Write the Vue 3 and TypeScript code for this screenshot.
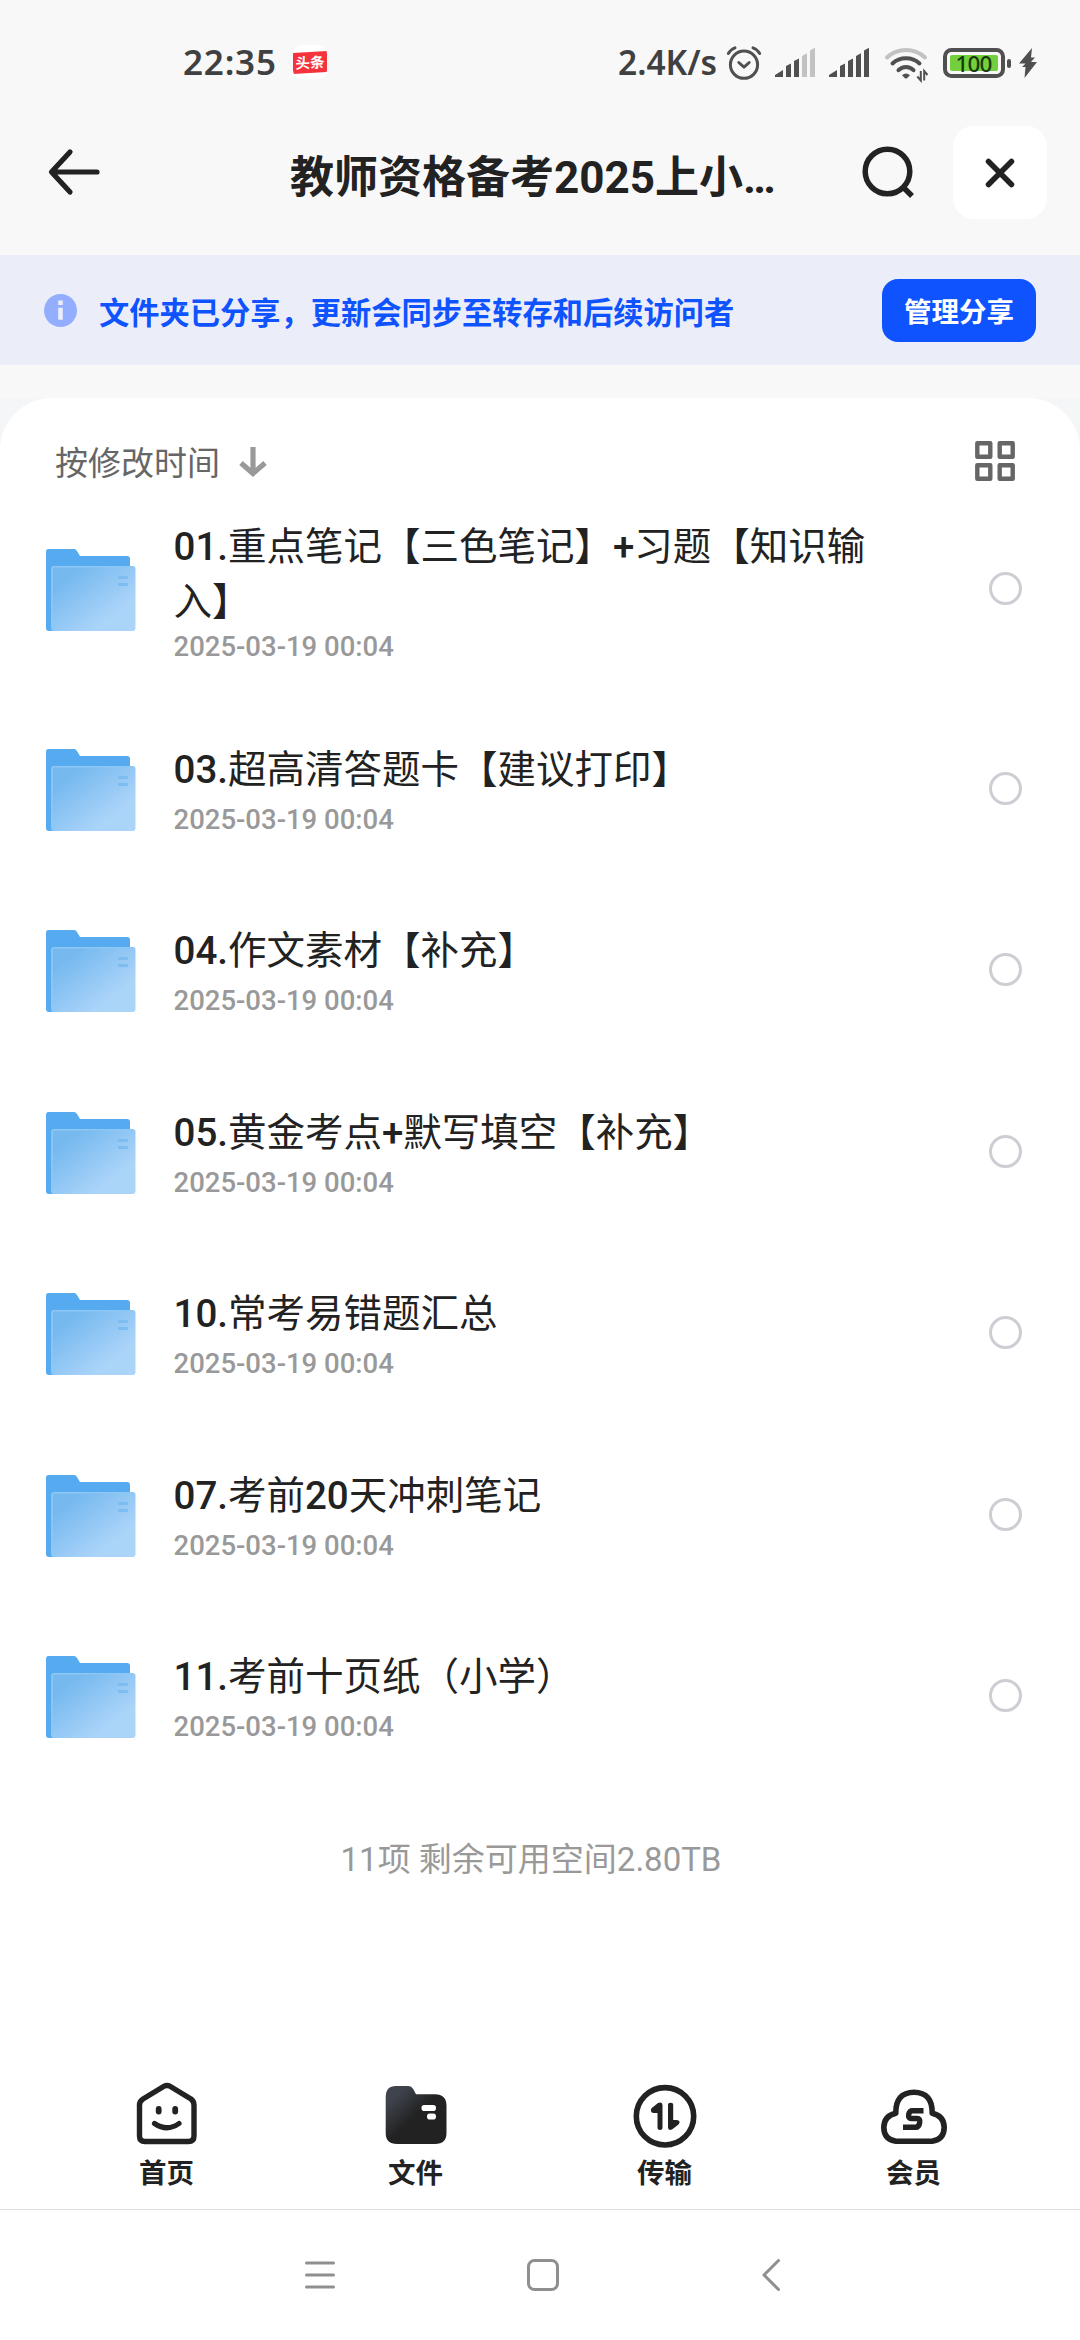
<script setup lang="ts">
interface FolderItem {
  name: string
  time: string
  tall?: boolean
}

interface Run {
  text: string
  latin: boolean
}

const folders: FolderItem[] = [
  { name: '01.重点笔记【三色笔记】+习题【知识输\n入】', time: '2025-03-19 00:04', tall: true },
  { name: '03.超高清答题卡【建议打印】', time: '2025-03-19 00:04' },
  { name: '04.作文素材【补充】', time: '2025-03-19 00:04' },
  { name: '05.黄金考点+默写填空【补充】', time: '2025-03-19 00:04' },
  { name: '10.常考易错题汇总', time: '2025-03-19 00:04' },
  { name: '07.考前20天冲刺笔记', time: '2025-03-19 00:04' },
  { name: '11.考前十页纸（小学）', time: '2025-03-19 00:04' },
]

// Latin runs are set in medium weight, Chinese runs in regular
function runs(line: string): Run[] {
  return (line.match(/[\x20-\x7e]+|[^\x20-\x7e]+/g) ?? []).map((text) => ({
    text,
    latin: /^[\x20-\x7e]/.test(text),
  }))
}
</script>

<template>
  <div class="screen">
    <div class="status">
      <span class="clock">22:35</span>
      <span class="news"><span class="news-tag">头条</span></span>
      <span class="speed">2.4K/s</span>
      <svg class="status-icons" width="316" height="40" viewBox="724 42 316 40" fill="none">
        <g stroke="#505050" stroke-width="3" stroke-linecap="round" stroke-linejoin="round">
          <circle cx="744" cy="63.7" r="13.6" />
          <path d="M738.800 61.500l5.200 4.600 5.200-4.600" />
          <path d="M728.300 52.500q2.500-4.300 6.700-5.700M759.700 52.500q-2.500-4.300-6.700-5.700" />
        </g>
        <g fill="#505050">
          <path d="M775 76v-2l8-5v7zM786 76V65l5-2.500V76zM794 76V60l5-2.500V76z" />
          <path d="M802 76V55l5-2.800V76zM810 76V49.500l5-2.800V76z" fill="#c2c2c2" />
          <path d="M829 76v-2l8-5v7zM840 76V65l5-2.500V76zM848 76V60l5-2.500V76zM856 76V55l5-2.800V76zM864 76V49.500l5-2.800V76z" />
        </g>
        <g stroke-width="4" stroke-linecap="round">
          <path d="M887 56.500Q895 49 906 49T925 56.500" stroke="#c2c2c2" />
          <path d="M892.500 62.500Q898 57.300 906 57.300T919.500 62.500" stroke="#505050" />
          <path d="M898.500 69.200Q901.500 66 906 66T913.500 69.200" stroke="#505050" />
        </g>
        <path d="M902 74.200q4-3.600 8 0l-3 3q-1 .8-2 0z" fill="#505050" />
        <path d="M920.800 70v9.500l-3.500-4M924.200 79.500V70l3.300 4" stroke="#505050" stroke-width="2" />
        <rect x="945" y="49" width="58" height="26" rx="6.500" stroke="#505050" stroke-width="4" />
        <rect x="950" y="54" width="48" height="16" rx="2" fill="#74cf3e" />
        <text x="973.500" y="70.700" text-anchor="middle" class="battery-text">100</text>
        <rect x="1007" y="58" width="4" height="9" rx="2" fill="#505050" />
        <path d="M1032 47l-13 15.500h6.500L1022 66h3.500l-1 11 12.500-16h-6l4-4.500h-4z" fill="#505050" />
      </svg>
    </div>

    <header class="header">
      <svg class="back" width="54" height="54" viewBox="0 0 54 54">
        <path d="M24 7L5.500 27 24 47M6 27H51" fill="none" stroke="#222" stroke-width="5.200" stroke-linecap="round" stroke-linejoin="round" />
      </svg>
      <h1 class="title">教师资格备考2025上小…</h1>
      <svg class="search" width="54" height="54" viewBox="0 0 54 54" fill="none" stroke="#222" stroke-width="5.500">
        <circle cx="26.500" cy="26.500" r="22.300" />
        <path d="M42 42l9 9" />
      </svg>
      <button class="close">
        <svg width="34" height="34" viewBox="0 0 34 34">
          <path d="M5.500 5.500l23 23M28.500 5.500l-23 23" stroke="#222" stroke-width="5.500" stroke-linecap="round" />
        </svg>
      </button>
    </header>

    <div class="banner">
      <svg width="33" height="33" viewBox="0 0 33 33">
        <circle cx="16.500" cy="16.500" r="16.500" fill="#93aefe" />
        <path d="M14.200 6.500h4.600v4.600h-4.600zM14.200 13.800h4.600v12h-4.600z" fill="#ebeef8" />
      </svg>
      <span class="banner-text">文件夹已分享，更新会同步至转存和后续访问者</span>
      <button class="manage">管理分享</button>
    </div>

    <div class="sheet-back">
      <main class="sheet">
        <div class="sort">
          <span class="sort-label">按修改时间</span>
          <svg class="sort-arrow" width="28" height="30" viewBox="0 0 28 30">
            <path d="M14 0V25M2 16l12 10.500L26 16" fill="none" stroke="#999" stroke-width="5.200" />
          </svg>
          <svg class="grid" width="40" height="40" viewBox="0 0 40 40">
            <path d="M2.300 2.300h13v13.500h-13zM24.700 2.300h13v13.500h-13zM2.300 24.300h13v13.500h-13zM24.700 24.300h13v13.500h-13z" fill="none" stroke="#666" stroke-width="4.400" stroke-linejoin="round" />
          </svg>
        </div>

        <ul class="list">
          <li v-for="item in folders" :key="item.name" class="row" :class="{ tall: item.tall }">
            <svg class="folder" width="90" height="82" viewBox="0 0 90 82">
              <defs>
                <linearGradient id="front" x1="0" y1="0.100" x2="0.900" y2="1">
                  <stop offset="0.150" stop-color="#76b9ef" />
                  <stop offset="0.780" stop-color="#abd4f9" />
                </linearGradient>
              </defs>
              <path d="M2.500 0H28q2 0 3 2l3 5H81q3 0 3 3V60L8 82H3q-3 0-3-3V3Q0 0 2.500 0z" fill="#55aaf0" />
              <rect x="5" y="17" width="84.500" height="65" rx="3" fill="url(#front)" />
              <path d="M6 80V20q0-2.200 2.500-2.200H87" fill="none" stroke="#8cc7f6" stroke-width="1.600" />
              <path d="M72 28.500h10M72 35.500h10" stroke="#7fbdf1" stroke-width="3.200" />
            </svg>
            <div class="info">
              <div v-for="line in item.name.split('\n')" :key="line" class="name"><span v-for="(run, i) in runs(line)" :key="i" :class="{ latin: run.latin }">{{ run.text }}</span></div>
              <div class="time">{{ item.time }}</div>
            </div>
            <span class="check"></span>
          </li>
        </ul>
        <p class="summary">11项 剩余可用空间2.80TB</p>
      </main>
    </div>

    <nav class="tabs">
      <div class="tab">
        <svg width="66" height="66" viewBox="0 0 66 66" fill="none" stroke="#222" stroke-linecap="round" stroke-linejoin="round">
          <path d="M30 5.300Q33 3.500 36 5.300L57 18Q60 20.300 60 24V55Q60 60.500 54.500 60.500H11Q5.500 60.500 5.500 55V24Q5.500 20.300 9 18z" stroke-width="5.400" />
          <path d="M20.500 42.500Q33 51 45 42.500" stroke-width="5.200" />
          <g fill="#222" stroke="none"><rect x="21.800" y="25" width="5.800" height="8.500" rx="2.900" /><rect x="38.300" y="25" width="5.800" height="8.500" rx="2.900" /></g>
        </svg>
        <span>首页</span>
      </div>
      <div class="tab">
        <svg width="66" height="66" viewBox="0 0 66 66">
          <defs>
            <linearGradient id="dark" x1="0.050" y1="0.050" x2="0.650" y2="0.650">
              <stop offset="0.200" stop-color="#3e434c" />
              <stop offset="0.750" stop-color="#222" />
            </linearGradient>
          </defs>
          <path d="M13 5H25.500Q28.500 5 30 7.800L33 13.200H52Q63.500 13.200 63.500 25V52Q63.500 63 52 63H14Q2.700 63 2.700 52V16Q2.700 5 13 5z" fill="url(#dark)" />
          <rect x="38.500" y="24" width="14.500" height="6" rx="2.800" fill="#fff" />
          <rect x="44" y="32.500" width="9" height="6" rx="2.800" fill="#fff" />
        </svg>
        <span>文件</span>
      </div>
      <div class="tab">
        <svg width="66" height="68" viewBox="0 0 66 68" class="transfer">
          <circle cx="33" cy="35.300" r="28.700" fill="none" stroke="#222" stroke-width="5.600" />
          <path d="M26 21.900Q30.500 20.500 30.500 24V46.500Q30.500 49 28 49T25.500 46.500V32H21.500Q17.500 31 19.500 27.200z" fill="#222" />
          <path d="M36 24Q36 21.700 38.600 21.700T41.200 24V39H44.500Q49.500 39.500 46.500 43.500L40 48.500Q36 50 36 46.500z" fill="#222" />
        </svg>
        <span>传输</span>
      </div>
      <div class="tab">
        <svg width="66" height="66" viewBox="0 0 66 66" fill="none" stroke="#222">
          <path d="M15 60.300Q3 58.500 2.800 46.500Q3 35 14.800 32.300Q14.500 11.500 33 11.300Q51.500 11.500 51.200 32.300Q63 35 63.200 46.500Q63 58.500 51 60.300z" stroke-width="5.600" stroke-linejoin="round" />
          <path d="M42.500 29.700H31.500Q28.500 29.700 27.700 33.300Q27 37.500 30.500 37.500H36Q39.500 37.500 38.700 41.500Q38 46.300 34.500 46.300H22" stroke-width="5.400" />
        </svg>
        <span>会员</span>
      </div>
    </nav>

    <footer class="system">
      <svg width="30" height="36" viewBox="0 0 30 36"><path d="M1.500 6h27M1.500 18h27M1.500 30h27" /></svg>
      <svg class="home" width="36" height="36" viewBox="0 0 36 36"><rect x="3.500" y="3.500" width="29" height="29" rx="6" /></svg>
      <svg width="20" height="36" viewBox="0 0 20 36"><path d="M17.500 3.500L3 18l14.500 14.500" /></svg>
    </footer>
  </div>
</template>

<style>
body {
  margin: 0;
  background: #f8f8f8;
}
</style>

<style scoped>
.screen {
  width: 1080px;
  height: 2340px;
  display: flex;
  flex-direction: column;
  overflow: hidden;
  background: #f8f8f8;
  color: #222;
  font-family: Roboto, "Noto Sans CJK SC", sans-serif;
}
button {
  border: 0;
  padding: 0;
  font-family: inherit;
}
svg {
  display: block;
  flex: none;
}
.status {
  height: 126px;
  box-sizing: border-box;
  padding: 0 40px 2px 183px;
  display: flex;
  align-items: center;
  font-family: "Noto Sans", "Noto Sans CJK SC", sans-serif;
  font-weight: 600;
  color: #404040;
}
.clock {
  width: 110px;
  padding-bottom: 1px;
  font-size: 35px;
  letter-spacing: 0.8px;
}
.news {
  width: 34px;
  height: 34px;
  border-radius: 9px;
  background: #fff;
  display: flex;
  align-items: center;
  justify-content: center;
  overflow: hidden;
}
.news-tag {
  width: 34px;
  height: 21px;
  line-height: 20px;
  text-align: center;
  background: #f5333c;
  color: #fff;
  font-size: 14.5px;
  font-weight: 700;
  transform: skewY(-3deg);
}
.speed {
  margin-left: auto;
  width: 106px;
  padding-bottom: 1px;
  font-size: 33.5px;
  white-space: nowrap;
}
.status-icons {
  margin-top: 1px;
}
.battery-text {
  font-size: 22.5px;
  letter-spacing: -0.8px;
  font-family: "Noto Sans", sans-serif;
  font-weight: 500;
  fill: #173a0a;
}
.header {
  height: 129px;
  display: flex;
  align-items: flex-start;
  padding: 0 33px 0 46px;
}
.back {
  margin-top: 19px;
}
.title {
  margin: 20px 0 0 190px;
  width: 572px;
  font-size: 44px;
  line-height: 64px;
  font-weight: 700;
  white-space: nowrap;
}
.search {
  margin: 19px 38px 0 -1px;
}
.close {
  width: 94px;
  height: 93px;
  border-radius: 21px;
  background: #fff;
  display: flex;
  align-items: center;
  justify-content: center;
}
.banner {
  height: 110px;
  box-sizing: border-box;
  padding: 0 44px;
  display: flex;
  align-items: center;
  background: #ebeef8;
}
.banner-text {
  margin-left: 22px;
  padding-top: 2px;
  font-size: 30.25px;
  font-weight: 700;
  color: #0f53ff;
}
.manage {
  margin-left: auto;
  width: 154px;
  height: 63px;
  border-radius: 16px;
  background: #0f53ff;
  color: #fff;
  font-size: 27.5px;
  font-weight: 700;
}
.sheet-back {
  margin-top: 33px;
  background: #f4f6f8;
}
.sheet {
  height: 1663px;
  border-radius: 52px 52px 0 0;
  background: #fff;
}
.sort {
  height: 83px;
  box-sizing: border-box;
  padding: 43px 65px 0 55px;
  display: flex;
  align-items: center;
  font-size: 33px;
  line-height: 40px;
  color: #666;
}
.sort-label {
  padding-top: 5px;
}
.sort-arrow {
  margin: 2px 0 0 19px;
}
.grid {
  margin-left: auto;
}
.list {
  list-style: none;
  margin: 0;
  padding: 0;
}
.row {
  height: 181.5px;
  box-sizing: border-box;
  padding: 0 58px 0 46px;
  display: flex;
  align-items: center;
}
.row.tall {
  height: 218px;
}
.info {
  margin-left: 37.5px;
  width: 715px;
}
.name {
  font-size: 38.5px;
  line-height: 55px;
}
.latin {
  font-weight: 500;
}
.time {
  margin-top: 5px;
  font-size: 27.5px;
  line-height: 36px;
  font-weight: 500;
  color: #999;
}
.tall .info {
  padding-top: 4px;
}
.tall .time {
  margin-top: 0;
}
.check {
  margin: 0 0 3px auto;
  width: 33px;
  height: 33px;
  box-sizing: border-box;
  border: 3px solid #cdcdd4;
  border-radius: 50%;
}
.summary {
  margin: 48px 18px 0 0;
  text-align: center;
  font-size: 33px;
  line-height: 48px;
  color: #999;
}
.tabs {
  height: 149px;
  box-sizing: border-box;
  padding: 20px 42px 0;
  display: flex;
  border-bottom: 1px solid #e0e0e0;
  background: #fff;
}
.tab {
  flex: 1;
  display: flex;
  flex-direction: column;
  align-items: center;
  font-size: 27.5px;
  line-height: 40px;
  font-weight: 700;
}
.tab span {
  margin-top: 7px;
}
.tab .transfer {
  margin-bottom: -2px;
}
.system {
  flex: 1;
  background: #fff;
  display: flex;
  align-items: center;
  padding-left: 305px;
}
.system .home {
  margin: 0 200px 0 190px;
}
.system svg {
  fill: none;
  stroke: #8f8f8f;
  stroke-width: 3;
  stroke-linecap: round;
  stroke-linejoin: round;
}
</style>
